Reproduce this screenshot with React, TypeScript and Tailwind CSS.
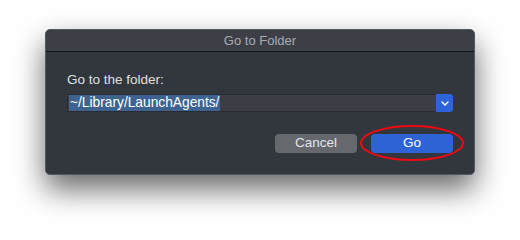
import React from 'react';

export default function App() {
  return (
    <div className="w-[520px] h-[240px] bg-white pt-[29px] pl-[45px] font-['Liberation_Sans',sans-serif]">
      <div className="w-[430px] h-[146px] rounded-[5px] bg-[#32363d] border border-[#55585e] shadow-[0_14px_30px_rgba(0,0,0,0.6)] flex flex-col overflow-hidden">
        {/* Title bar */}
        <div className="h-[22px] bg-[#3c3f46] border-b border-[#141518] flex items-center justify-center text-[13px] text-[#a9abaf]">
          Go to Folder
        </div>

        <div className="flex flex-col px-[21px] pt-[20px]">
          <div className="text-[13.5px] text-[#dfe0e2] leading-[16px]">Go to the folder:</div>

          <div className="mt-[6px] h-[18px] flex bg-[#3b3e45] border border-[#2a2c31]">
            <div className="flex-1 flex items-center px-[1px]">
              <span className="bg-[#3e6390] text-white text-[13.75px] leading-[16px] px-[1px]">~/Library/LaunchAgents/</span>
            </div>
            <div className="w-[17px] -my-px -mr-px rounded-r-[3px] bg-[#2f63d8] flex items-center justify-center">
              <svg width="8" height="5" viewBox="0 0 8 5" fill="none">
                <path d="M1 1l3 3 3-3" stroke="white" strokeWidth="1.4" strokeLinecap="round" strokeLinejoin="round" />
              </svg>
            </div>
          </div>

          <div className="mt-[22px] flex justify-end gap-[14px]">
            <button className="w-[82px] h-[19px] rounded-[4px] bg-[#65686d] text-[13.5px] text-[#e4e5e6] flex items-center justify-center">
              Cancel
            </button>
            <div className="relative">
              <button className="w-[82px] h-[19px] rounded-[4px] bg-[#2e63d6] text-[13.5px] text-white flex items-center justify-center">
                Go
              </button>
              <div className="absolute left-[-11px] top-[-9px] w-[104px] h-[36px] rounded-[50%] border-[2.5px] border-[#ee0a12]" />
            </div>
          </div>
        </div>
      </div>
    </div>
  );
}
